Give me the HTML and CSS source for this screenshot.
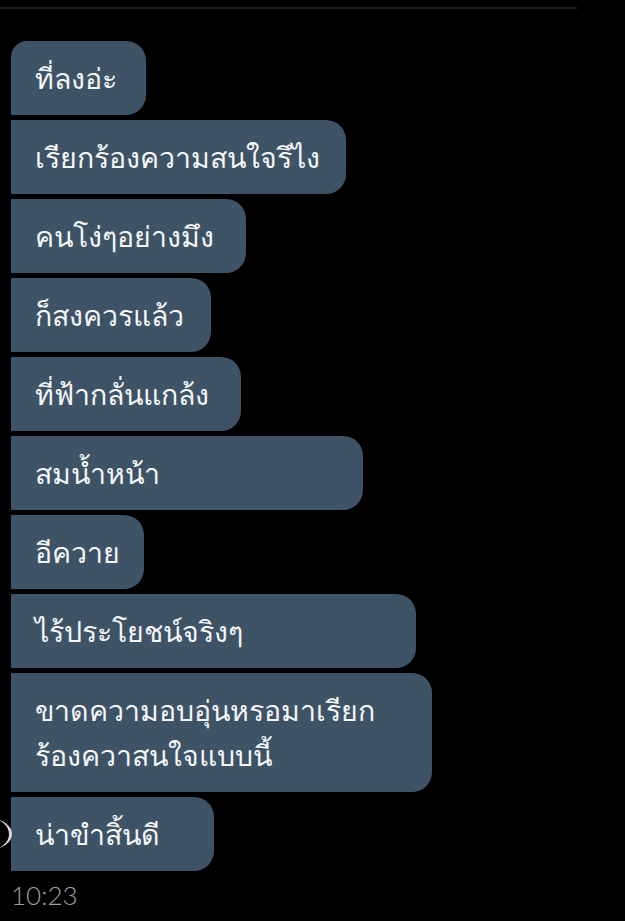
FILE: index.html
```html
<!DOCTYPE html>
<html lang="th">
<head>
    <meta charset="UTF-8">
    <meta name="viewport" content="width=device-width, initial-scale=1.0">
    <title>แชท</title>
    <link rel="stylesheet" href="styles.css">
</head>
<body>
    <div class="top-rule"></div>

    <div class="thread">
        <div class="bubble first w-1">ที่ลงอ่ะ</div>
        <div class="bubble w-2">เรียกร้องความสนใจรึไง</div>
        <div class="bubble w-3">คนโง่ๆอย่างมึง</div>
        <div class="bubble w-4">ก็สงควรแล้ว</div>
        <div class="bubble w-5">ที่ฟ้ากลั่นแกล้ง</div>
        <div class="bubble w-6">สมน้ำหน้า</div>
        <div class="bubble w-7">อีควาย</div>
        <div class="bubble w-8">ไร้ประโยชน์จริงๆ</div>
        <div class="bubble two-line w-9">ขาดความอบอุ่นหรอมาเรียก<br>ร้องควาสนใจแบบนี้</div>
        <div class="bubble-row">
            <span class="avatar-edge"></span>
            <div class="bubble w-10">น่าขำสิ้นดี</div>
        </div>
    </div>

    <div class="time">10:23</div>
</body>
</html>
```

FILE: styles.css
```css
:root {
    --bubble: #3e5366;
    --text: #f4f6f8;
    --muted: #a0a0a0;
}
body {
    margin: 0;
    background: #000;
    font-family: 'Noto Sans', 'DejaVu Sans', sans-serif;
    width: 625px;
    height: 921px;
    overflow: hidden;
}
.top-rule {
    width: 577px;
    height: 2px;
    margin-top: 7px;
    background: #1f1f1f;
}
.thread {
    margin-top: 32px;
    padding-left: 11px;
    display: flex;
    flex-direction: column;
    align-items: flex-start;
    gap: 5px;
}
.bubble {
    box-sizing: border-box;
    background: var(--bubble);
    color: var(--text);
    font-size: 28.5px;
    line-height: 44px;
    padding: 15px 24px;
    border-radius: 0 20px 20px 0;
}
.bubble.first {
    border-top-left-radius: 16px;
}
.bubble.two-line {
    line-height: 44.5px;
}
/* bubble widths as they sit in the chat */
.w-1 { min-width: 135px; }
.w-2 { min-width: 335px; }
.w-3 { min-width: 235px; }
.w-4 { min-width: 200px; }
.w-5 { min-width: 230px; }
.w-6 { min-width: 352px; }
.w-7 { min-width: 133px; }
.w-8 { min-width: 405px; }
.w-9 { min-width: 421px; }
.w-10 { min-width: 203px; }
.bubble-row {
    position: relative;
}
.avatar-edge {
    position: absolute;
    left: -40px;
    top: 22px;
    width: 38px;
    height: 30px;
    border-radius: 50%;
    border-right: 3px solid #d8d8d8;
}
.time {
    margin: 8px 0 0 11px;
    color: var(--muted);
    font-size: 26px;
    font-weight: 300;
    font-family: 'Lato', 'Open Sans', sans-serif;
}
```
